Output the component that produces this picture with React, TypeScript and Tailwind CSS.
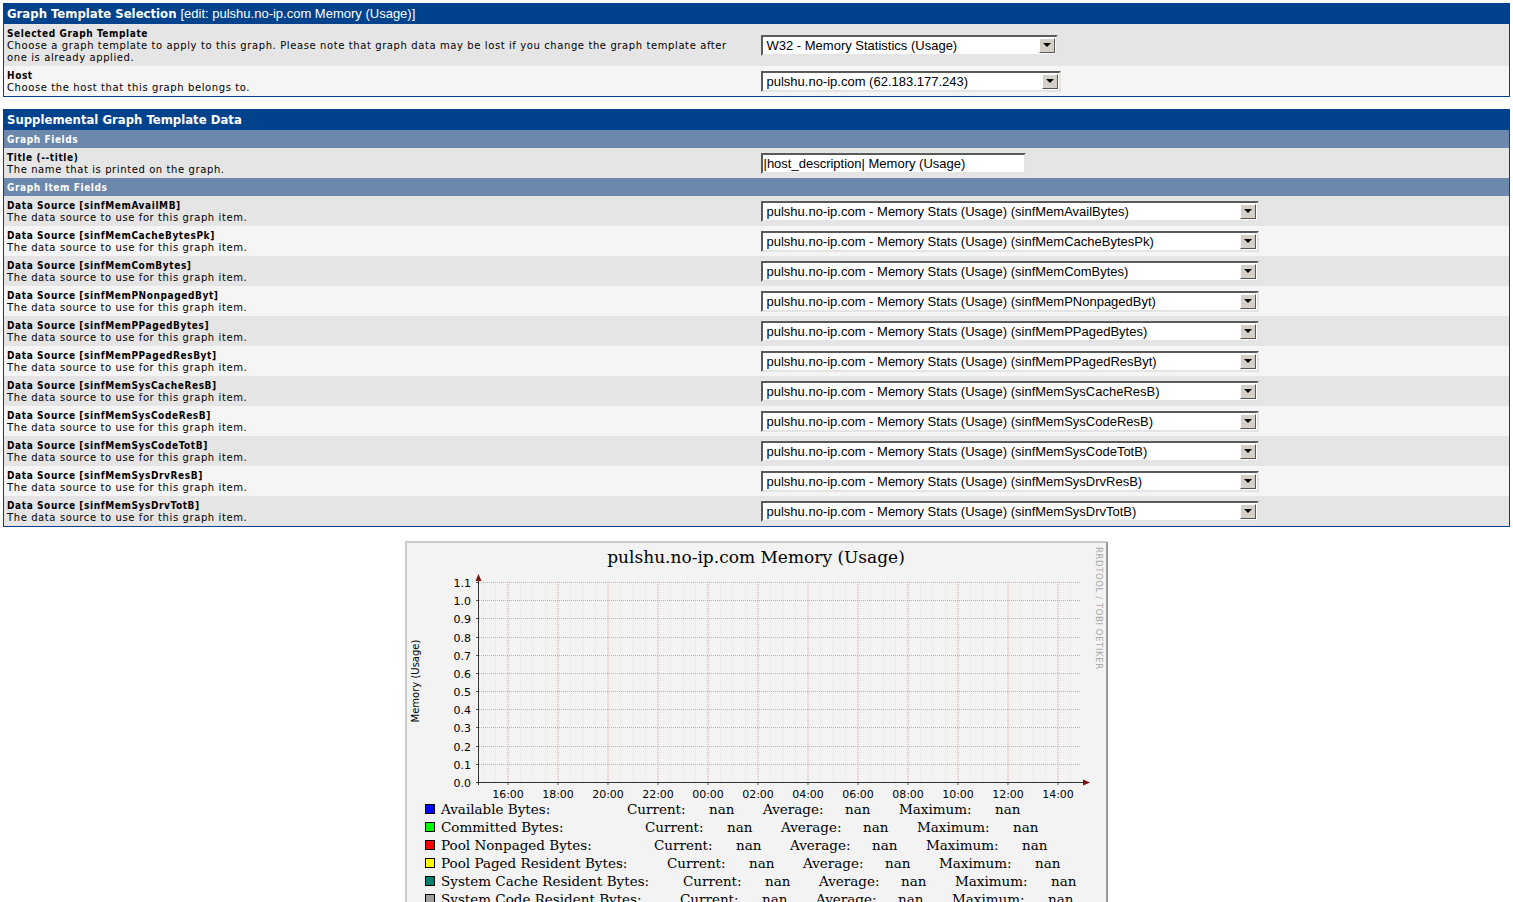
const LABEL_FONT = { fontFamily: '"DejaVu Sans Condensed", "DejaVu Sans", sans-serif' };
const DESC_FONT = { fontFamily: '"DejaVu Sans", Verdana, sans-serif' };

const SOURCES = [
  ['sinfMemAvailMB', 'sinfMemAvailBytes'],
  ['sinfMemCacheBytesPk', 'sinfMemCacheBytesPk'],
  ['sinfMemComBytes', 'sinfMemComBytes'],
  ['sinfMemPNonpagedByt', 'sinfMemPNonpagedByt'],
  ['sinfMemPPagedBytes', 'sinfMemPPagedBytes'],
  ['sinfMemPPagedResByt', 'sinfMemPPagedResByt'],
  ['sinfMemSysCacheResB', 'sinfMemSysCacheResB'],
  ['sinfMemSysCodeResB', 'sinfMemSysCodeResB'],
  ['sinfMemSysCodeTotB', 'sinfMemSysCodeTotB'],
  ['sinfMemSysDrvResB', 'sinfMemSysDrvResB'],
  ['sinfMemSysDrvTotB', 'sinfMemSysDrvTotB'],
];

function Select({ value, width }: { value: string; width: string }) {
  return (
    <div
      className={`${width} h-[21px] flex items-stretch bg-white border-2 border-t-[#5a5a5a] border-l-[#5a5a5a] border-b-[#e4e4e4] border-r-[#e4e4e4]`}
    >
      <div
        className="flex-1 pl-[4px] text-[13px] leading-[17px] text-black truncate"
        style={{ fontFamily: '"Liberation Sans", Arial, sans-serif' }}
      >
        {value}
      </div>
      <div className="w-[16px] m-[1px] bg-[#d4d0c8] border border-t-white border-l-white border-b-[#555] border-r-[#555] flex items-center justify-center">
        <div className="w-0 h-0 border-l-[4px] border-r-[4px] border-t-[4px] border-l-transparent border-r-transparent border-t-black" />
      </div>
    </div>
  );
}

function Row({
  title,
  desc,
  dark,
  children,
}: {
  title: string;
  desc: React.ReactNode;
  dark: boolean;
  children: React.ReactNode;
}) {
  return (
    <div className={`flex items-center ${dark ? 'bg-[#e5e5e5]' : 'bg-[#f5f5f5]'}`}>
      <div className="w-1/2 pl-[3px] pr-2 pt-[4px] pb-[2px] text-[10px] leading-[12px] text-black">
        <div className="font-bold tracking-[0.6px]" style={LABEL_FONT}>{title}</div>
        <div className="tracking-[0.6px]" style={DESC_FONT}>{desc}</div>
      </div>
      <div className="w-1/2 pl-[4px]">{children}</div>
    </div>
  );
}

function Header({ children }: { children: React.ReactNode }) {
  return (
    <div className="bg-[#00438c] h-[20px] pl-[3px] flex items-center text-white text-[13px]">
      {children}
    </div>
  );
}

function SubHeader({ children }: { children: React.ReactNode }) {
  return (
    <div
      className="bg-[#6d88ad] h-[18px] pl-[3px] flex items-center text-white text-[10px] font-bold tracking-[0.6px]"
      style={LABEL_FONT}
    >
      {children}
    </div>
  );
}

const LEGEND = [
  { name: 'Available Bytes:', color: '#0000ff', x: 222 },
  { name: 'Committed Bytes:', color: '#00ff00', x: 240 },
  { name: 'Pool Nonpaged Bytes:', color: '#ff0000', x: 249 },
  { name: 'Pool Paged Resident Bytes:', color: '#ffff00', x: 262 },
  { name: 'System Cache Resident Bytes:', color: '#00806b', x: 278 },
  { name: 'System Code Resident Bytes:', color: '#a0a0a0', x: 275 },
  { name: 'System Code Total Bytes:', color: '#ff8000', x: 262 },
  { name: 'System Driver Resident Bytes:', color: '#8000ff', x: 278 },
];

function Graph() {
  const x0 = 74;
  const x1 = 675;
  const y0 = 241;
  const step = 200 / 11;
  const minors: number[] = [];
  for (let x = 78; x < x1; x += 12.5) minors.push(x);
  const hours = ['16:00', '18:00', '20:00', '22:00', '00:00', '02:00', '04:00', '06:00', '08:00', '10:00', '12:00', '14:00'];
  const sans = '"DejaVu Sans", sans-serif';
  const serif = '"DejaVu Serif", serif';
  return (
    <svg width="703" height="420" className="block">
      <rect x="0" y="0" width="703" height="420" fill="#f3f3f3" />
      <path d="M1 420 V1 H702" stroke="#cbcbcb" strokeWidth="2" fill="none" />
      <path d="M702 1 V420" stroke="#9a9a9a" strokeWidth="2" fill="none" />
      <text x="351" y="22" textAnchor="middle" fontFamily={serif} fontSize="17" fill="#000">
        pulshu.no-ip.com Memory (Usage)
      </text>
      <text
        x="691"
        y="6"
        transform="rotate(90 691 6)"
        fontFamily={sans}
        fontSize="8.5"
        letterSpacing="0.6"
        fill="#a8a8a8"
      >
        RRDTOOL / TOBI OETIKER
      </text>
      <text
        x="14"
        y="140"
        transform="rotate(-90 14 140)"
        textAnchor="middle"
        fontFamily={sans}
        fontSize="10"
        fill="#000"
      >
        Memory (Usage)
      </text>
      {minors.map((x) => (
        <line key={x} x1={x} y1={41} x2={x} y2={y0} stroke="#e6e6e6" strokeWidth="1" strokeDasharray="1 1" />
      ))}
      {hours.map((_, i) => (
        <line key={i} x1={103 + i * 50} y1={41} x2={103 + i * 50} y2={y0} stroke="#e8a0a0" strokeWidth="1" strokeDasharray="1 1" />
      ))}
      {Array.from({ length: 12 }).map((_, i) => {
        const y = Math.round(y0 - i * step) + 0.5;
        return (
          <g key={i}>
            {i > 0 && <line x1={x0} y1={y} x2={x1} y2={y} stroke="#e8a0a0" strokeWidth="1" strokeDasharray="1 1" />}
            <line x1={x0 - 3} y1={y} x2={x0} y2={y} stroke="#555" />
            <text x={x0 - 8} y={y + 4} textAnchor="end" fontFamily={sans} fontSize="11" fill="#000">
              {(i / 10).toFixed(1)}
            </text>
          </g>
        );
      })}
      {hours.map((h, i) => (
        <g key={h}>
          <line x1={103 + i * 50} y1={y0} x2={103 + i * 50} y2={y0 + 3} stroke="#555" />
          <text x={103 + i * 50} y={257} textAnchor="middle" fontFamily={sans} fontSize="11" fill="#000">
            {h}
          </text>
        </g>
      ))}
      <line x1={x0 - 0.5} y1={36} x2={x0 - 0.5} y2={y0 + 3} stroke="#333" />
      <line x1={x0 - 3} y1={y0 + 0.5} x2={x1 + 4} y2={y0 + 0.5} stroke="#333" />
      <path d={`M${x0 - 3.5} 40 L${x0 - 0.5} 33 L${x0 + 2.5} 40 Z`} fill="#7a1010" />
      <path d={`M${x1 + 3} ${y0 - 2.5} L${x1 + 10} ${y0 + 0.5} L${x1 + 3} ${y0 + 3.5} Z`} fill="#7a1010" />
      {LEGEND.map((l, i) => {
        const y = 273 + i * 18;
        return (
          <g key={l.name} fontFamily={serif} fontSize="13.5" fill="#000">
            <rect x="20.5" y={y - 9.5} width="9" height="9" fill={l.color} stroke="#000" />
            <text x="36" y={y}>{l.name}</text>
            <text x={l.x} y={y}>Current:</text>
            <text x={l.x + 82} y={y}>nan</text>
            <text x={l.x + 136} y={y}>Average:</text>
            <text x={l.x + 218} y={y}>nan</text>
            <text x={l.x + 272} y={y}>Maximum:</text>
            <text x={l.x + 368} y={y}>nan</text>
          </g>
        );
      })}
    </svg>
  );
}

export default function App() {
  return (
    <div className="min-h-screen bg-white p-[3px]">
      <div className="border border-[#00438c]">
        <Header>
          <span className="font-bold" style={{ fontFamily: '"DejaVu Sans Condensed", "DejaVu Sans", sans-serif' }}>
            Graph Template Selection
          </span>
          <span className="ml-[4px]" style={{ fontFamily: '"Liberation Sans", Arial, sans-serif' }}>
            [edit: pulshu.no-ip.com Memory (Usage)]
          </span>
        </Header>
        <Row
          dark
          title="Selected Graph Template"
          desc={
            <>
              Choose a graph template to apply to this graph. Please note that graph data may be lost if you change the graph template after
              <br />
              one is already applied.
            </>
          }
        >
          <Select value="W32 - Memory Statistics (Usage)" width="w-[297px]" />
        </Row>
        <Row dark={false} title="Host" desc="Choose the host that this graph belongs to.">
          <Select value="pulshu.no-ip.com (62.183.177.243)" width="w-[300px]" />
        </Row>
      </div>

      <div className="mt-[12px] border border-[#00438c]">
        <Header>
          <span className="font-bold" style={{ fontFamily: '"DejaVu Sans Condensed", "DejaVu Sans", sans-serif' }}>
            Supplemental Graph Template Data
          </span>
        </Header>
        <SubHeader>Graph Fields</SubHeader>
        <Row dark title="Title (--title)" desc="The name that is printed on the graph.">
          <div
            className="w-[265px] h-[21px] bg-white border-2 border-t-[#5a5a5a] border-l-[#5a5a5a] border-b-[#e4e4e4] border-r-[#e4e4e4] pl-[1px] text-[13px] leading-[17px] text-black"
            style={{ fontFamily: '"Liberation Sans", Arial, sans-serif' }}
          >
            |host_description| Memory (Usage)
          </div>
        </Row>
        <SubHeader>Graph Item Fields</SubHeader>
        {SOURCES.map(([name, ds], i) => (
          <Row key={name} dark={i % 2 === 0} title={`Data Source [${name}]`} desc="The data source to use for this graph item.">
            <Select value={`pulshu.no-ip.com - Memory Stats (Usage) (${ds})`} width="w-[498px]" />
          </Row>
        ))}
      </div>

      <div className="flex justify-center mt-[14px]">
        <Graph />
      </div>
    </div>
  );
}
